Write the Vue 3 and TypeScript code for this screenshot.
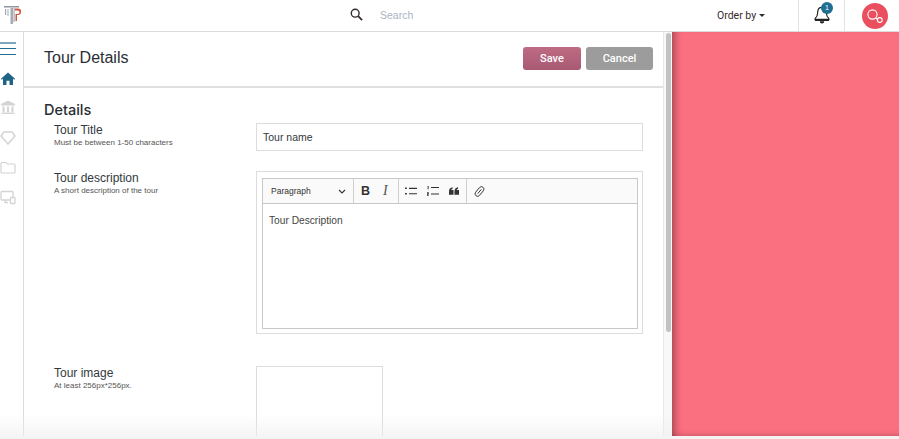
<script setup lang="ts">
const sideIcons = ['bank', 'gem', 'folder', 'devices']
</script>

<template>
  <div class="page">
    <header class="topbar">
      <div class="logo">
        <svg width="20" height="20" viewBox="0 0 20 20">
          <rect x="1" y="0" width="15" height="1.500" fill="#8f98a2" />
          <path d="M2 3h1.200v6H2zM4.500 3h1v7h-1zM7.500 2h2.500v16H7.500zM10.500 2h1.200v14h-1.200z" fill="#a4abb4" />
          <path d="M12 2.500h2.800a3.300 3.300 0 0 1 0 6.600H14v6h-1.500V8h2.200a1.800 1.800 0 0 0 0-3.600H12Z" fill="#d2573a" />
        </svg>
      </div>
      <div class="search">
        <svg class="search-icon" width="13" height="13" viewBox="0 0 14 14">
          <circle cx="5.600" cy="5.600" r="4.200" fill="none" stroke="#33292b" stroke-width="1.500" />
          <path d="M8.800 8.800 13 13" stroke="#33292b" stroke-width="1.800" />
        </svg>
        <span class="search-text">Search</span>
      </div>
      <div class="order">Order by<span class="caret"></span></div>
      <div class="bell-cell">
        <svg width="16" height="19" viewBox="0 0 18 21">
          <path d="M9 2.500c-3.200 0-4.800 2.600-4.800 5.500 0 3.600-1 5.300-3 7.200v.8h15.600v-.8c-2-1.900-3-3.600-3-7.200 0-2.900-1.600-5.500-4.800-5.500Z" fill="none" stroke="#222" stroke-width="1.300" />
          <path d="M1 16.500h16v1.300H1zM6.500 18h5a2.500 2.500 0 0 1-5 0Z" fill="#222" />
        </svg>
        <span class="badge">1</span>
      </div>
      <div class="user-cell">
        <span class="avatar">
          <svg width="18" height="16" viewBox="0 0 18 16">
            <circle cx="6.500" cy="6.500" r="4.600" fill="none" stroke="#fff" stroke-width="1.100" />
            <path d="M9.800 9.800 11.500 11.500" stroke="#fff" stroke-width="1.100" />
            <circle cx="13.800" cy="12" r="2.400" fill="none" stroke="#fff" stroke-width="1.100" />
          </svg>
        </span>
      </div>
    </header>

    <div class="body">
      <nav class="sidebar">
        <div class="burger"><i></i><i></i><i></i></div>
        <svg class="nav-icon home" width="14" height="13" viewBox="0 0 14 13">
          <path d="M7 .5 0 6.800l.8.900L2 6.700V13h3.500V8.800h3V13H12V6.700l1.200 1 .8-.900Z" fill="#1f6485" />
        </svg>
        <svg v-for="icon in sideIcons" :key="icon" class="nav-icon" width="16" height="15" viewBox="0 0 16 15">
          <path v-if="icon === 'bank'" d="M8 .5 1 4v1.500h14V4ZM2.500 6.500h2v5.500h-2zM7 6.500h2v5.500H7zM11.500 6.500h2v5.500h-2zM1.500 12.500h13V14h-13z" fill="#d3d4d6" />
          <path v-else-if="icon === 'gem'" d="M4 2h8l3 4-7 8-7-8Z" fill="none" stroke="#d3d4d6" stroke-width="1.500" />
          <path v-else-if="icon === 'folder'" d="M1 3.500a1 1 0 0 1 1-1h4l1.500 1.500H14a1 1 0 0 1 1 1V12a1 1 0 0 1-1 1H2a1 1 0 0 1-1-1Z" fill="none" stroke="#d3d4d6" stroke-width="1.200" />
          <g v-else fill="none" stroke="#d3d4d6" stroke-width="1.300">
            <rect x="1" y="1.500" width="12" height="8.500" rx="1" />
            <path d="M5 10v2.500h3" />
            <rect x="10.500" y="7.500" width="4.500" height="6" fill="#fff" rx=".8" />
          </g>
        </svg>
      </nav>

      <div class="main">
        <main class="content">
          <div class="title-row">
            <h1>Tour Details</h1>
            <div class="actions">
              <button class="btn save">Save</button>
              <button class="btn cancel">Cancel</button>
            </div>
          </div>
          <section class="details">
            <h2>Details</h2>
            <div class="field">
              <div class="label">
                <div class="label-main">Tour Title</div>
                <div class="label-sub">Must be between 1-50 characters</div>
              </div>
              <div class="input">Tour name</div>
            </div>
            <div class="field desc-field">
              <div class="label">
                <div class="label-main">Tour description</div>
                <div class="label-sub">A short description of the tour</div>
              </div>
              <div class="editor-wrap">
                <div class="editor">
                  <div class="toolbar">
                    <div class="tool-group para">
                      <span>Paragraph</span>
                      <svg width="8" height="5" viewBox="0 0 8 5"><path d="m1 1 3 3 3-3" fill="none" stroke="#333" stroke-width="1.100" /></svg>
                    </div>
                    <div class="tool-group marks">
                      <b class="bold">B</b>
                      <i class="italic">I</i>
                    </div>
                    <div class="tool-group lists">
                      <svg width="12" height="8" viewBox="0 0 12 8"><path d="M0 .5h1.800v1.500H0zM0 6h1.800v1.500H0zM4 .8h8v1.100H4zM4 6.200h8v1.100H4z" fill="#333" /></svg>
                      <svg width="12" height="10" viewBox="0 0 12 10"><path d="M.6 0h1v3.200h-1zM0 6.200h1.800v1.800H.8v.6h1V9.800H0V7.300h1v-.3H0zM4 1h8v1.100H4zM4 7.500h8v1.100H4z" fill="#333" /></svg>
                      <svg width="10" height="8" viewBox="0 0 11 8"><path d="M0 4.500C0 2 1.500.5 4 0v1.500C3 1.800 2.500 2.300 2.400 3H5v5H0ZM6 4.500C6 2 7.500.5 10 0v1.500C9 1.800 8.500 2.300 8.400 3H11v5H6Z" fill="#333" /></svg>
                    </div>
                    <div class="tool-group link">
                      <svg width="11" height="11" viewBox="0 0 11 11">
                        <g transform="rotate(-50 5.500 5.500)" fill="none" stroke="#333" stroke-width=".9">
                          <rect x="0" y="3" width="11" height="5" rx="2.500" />
                          <path d="M2.700 5.500h5.600" />
                        </g>
                      </svg>
                    </div>
                  </div>
                  <div class="editor-text">Tour Description</div>
                </div>
              </div>
            </div>
            <div class="field image-field">
              <div class="label">
                <div class="label-main">Tour image</div>
                <div class="label-sub">At least 256px*256px.</div>
              </div>
              <div class="image-box"></div>
            </div>
          </section>
        </main>
        <div class="scrollbar"><div class="thumb"></div></div>
      </div>

      <aside class="panel"></aside>
    </div>
    <div class="fade"></div>
  </div>
</template>

<style>
html, body { margin: 0; background: #fff; overflow: hidden; }
</style>

<style scoped>
.page {
  width: 899px;
  height: 439px;
  position: relative;
  overflow: hidden;
  background: #fff;
  font-family: "Liberation Sans", Arial, sans-serif;
  color: #33383d;
  display: flex;
  flex-direction: column;
}
.topbar {
  height: 32px;
  box-sizing: border-box;
  flex: none;
  display: flex;
  align-items: center;
  border-bottom: 1px solid #dcdcdc;
}
.logo { width: 349px; height: 31px; padding: 6px 0 0 3px; box-sizing: border-box; flex: none; }
.search { width: 356px; display: flex; align-items: center; flex: none; padding-bottom: 2px; box-sizing: border-box; }
.search-icon { margin: 0 17px 0 1px; }
.search-text { font-size: 10.500px; color: #a9b3c4; }
.order { width: 93px; flex: none; padding-left: 12px; box-sizing: border-box; font-size: 10.500px; color: #33292b; font-family: Roboto, sans-serif; }
.caret {
  display: inline-block;
  margin-left: 3px;
  vertical-align: 2px;
  border: 3px solid transparent;
  border-top-color: #33292b;
  border-bottom: 0;
}
.bell-cell {
  width: 47px;
  height: 31px;
  flex: none;
  box-sizing: border-box;
  border-left: 1px solid #e2e2e2;
  border-right: 1px solid #e2e2e2;
  position: relative;
  display: flex;
  justify-content: center;
  padding-top: 5px;
}
.badge {
  position: absolute;
  left: 22px;
  top: 2px;
  width: 12px;
  height: 12px;
  border-radius: 50%;
  background: #1f6f94;
  color: #fff;
  font-size: 7px;
  line-height: 12px;
  text-align: center;
}
.user-cell { flex: 1; display: flex; justify-content: center; align-items: center; padding-left: 5px; }
.avatar {
  width: 26px;
  height: 26px;
  border-radius: 50%;
  background: #e94f5e;
  display: flex;
  align-items: center;
  justify-content: center;
}
.body { flex: 1; display: flex; min-height: 0; }
.sidebar {
  width: 24px;
  box-sizing: border-box;
  flex: none;
  border-right: 1px solid #dcdcdc;
  display: flex;
  flex-direction: column;
  align-items: flex-start;
  padding: 10px 0 0;
}
.burger { width: 16px; height: 13px; display: flex; flex-direction: column; justify-content: space-between; }
.burger i { display: block; height: 1.500px; background: #1f6f94; }
.burger i:first-child { background: #7da9bc; }
.nav-icon { display: block; margin: 15px 0 0 0; }
.nav-icon.home { margin: 17px 0 0 1px; }
.main { width: 648px; flex: none; display: flex; }
.content { width: 639px; flex: none; }
.title-row {
  height: 56px;
  box-sizing: border-box;
  border-bottom: 2px solid #dfe0e1;
  display: flex;
  align-items: center;
  justify-content: space-between;
  padding: 0 10px 2px 20px;
}
h1 { margin: 0; font-size: 16px; font-weight: 400; color: #2a2e33; }
.actions { display: flex; gap: 5px; padding-top: 1px; }
.btn {
  height: 23px;
  border: 0;
  border-radius: 3px;
  color: #fff;
  font-family: Roboto, sans-serif;
  font-size: 11px;
  font-weight: 500;
  padding: 0;
}
.save { width: 58px; background: linear-gradient(#be6b84, #a85a72); }
.cancel { width: 67px; background: #9c9c9c; }
.details { padding: 13px 20px 0 20px; }
h2 { margin: 0 0 5px; font-family: Inter, sans-serif; font-size: 14.500px; line-height: 17px; font-weight: 500; color: #2a2e33; }
.field { display: flex; padding-left: 10px; }
.label { width: 202px; flex: none; }
.label-main { font-size: 12px; line-height: 15px; color: #33383d; }
.label-sub { font-size: 8px; line-height: 10px; color: #555; }
.input {
  width: 387px;
  height: 28px;
  box-sizing: border-box;
  border: 1px solid #dcdcdc;
  font-size: 10.500px;
  line-height: 26px;
  padding-left: 6px;
  color: #33383d;
}
.desc-field { margin-top: 20px; }
.editor-wrap {
  width: 387px;
  height: 163px;
  box-sizing: border-box;
  border: 1px solid #dcdcdc;
  padding: 6px 4px 4px 5px;
}
.editor { height: 100%; box-sizing: border-box; border: 1px solid #c8c8c8; display: flex; flex-direction: column; }
.toolbar {
  height: 24px;
  flex: none;
  background: #fafafa;
  border-bottom: 1px solid #c8c8c8;
  display: flex;
  align-items: stretch;
}
.tool-group { display: flex; align-items: center; border-right: 1px solid #cfcfcf; box-sizing: border-box; }
.para { width: 91px; padding: 0 7px 0 8px; justify-content: space-between; font-size: 8.500px; color: #333; }
.marks { width: 45px; padding-left: 7px; gap: 13px; font-size: 12.500px; color: #333; }
.bold { font-weight: 700; }
.italic { font-family: "Liberation Serif", serif; font-style: italic; font-size: 14px; font-weight: 400; color: #555; }
.lists { width: 68px; padding-left: 6px; gap: 10px; }
.link { border-right: 0; padding-left: 7px; }
.editor-text { padding: 10px 6px; font-size: 10.200px; line-height: 13px; color: #444; }
.image-field { margin-top: 32px; }
.image-box { width: 127px; height: 70px; box-sizing: border-box; border: 1px solid #dcdcdc; border-bottom: 0; }
.scrollbar { width: 9px; flex: none; background: #f8f8f8; border-left: 1px solid #e8e8e8; box-sizing: border-box; padding: 1px 1px 0 2px; }
.thumb { height: 299px; background: #c2c2c2; border-radius: 3px; }
.panel {
  flex: 1;
  height: 404px;
  position: relative;
  z-index: 2;
  background: #fb7081;
  box-shadow: inset 9px 0 8px -7px rgba(70, 20, 30, 0.55), inset 0 -6px 6px -6px rgba(70, 20, 30, 0.3);
}
.fade {
  position: absolute;
  left: 0;
  right: 0;
  bottom: 0;
  height: 25px;
  pointer-events: none;
  background: linear-gradient(rgba(238, 238, 238, 0), rgba(238, 238, 238, 0.6) 88%, #f4f4f4 88%);
}
</style>
